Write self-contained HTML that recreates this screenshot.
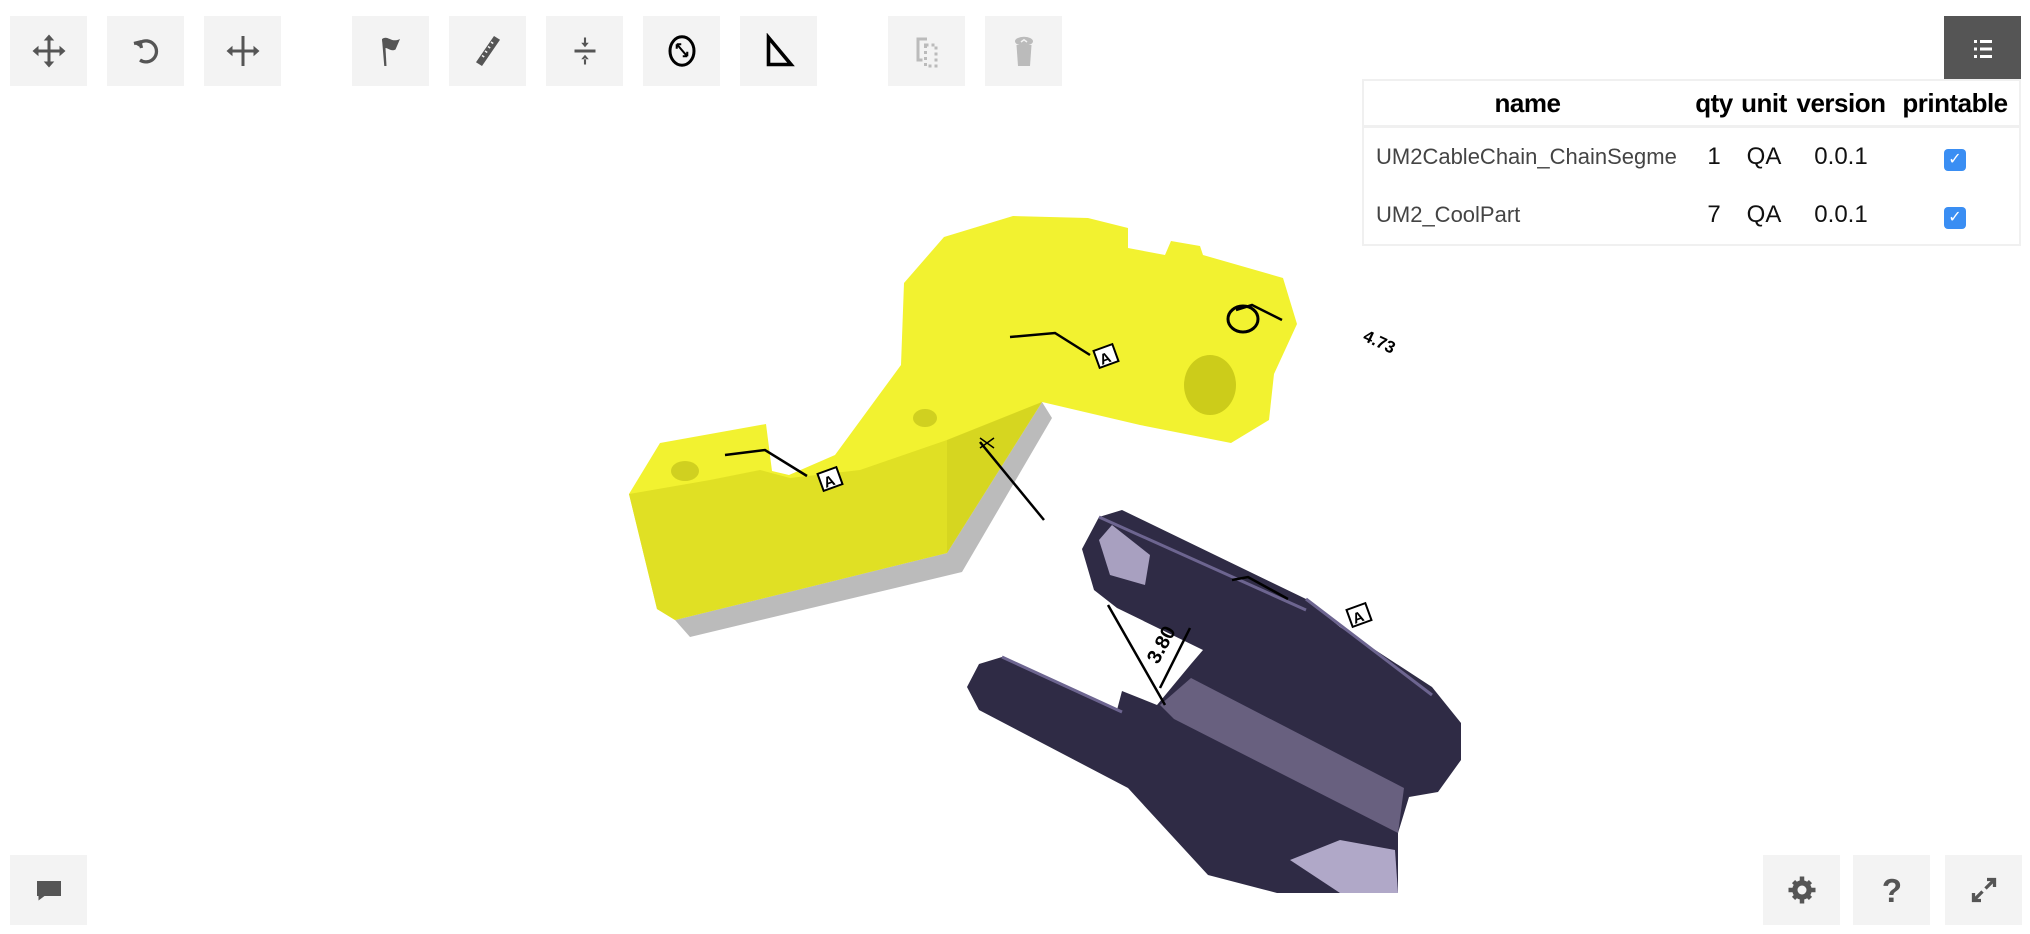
<!DOCTYPE html>
<html><head><meta charset="utf-8"><style>
body{margin:0;width:2030px;height:934px;background:#fff;position:relative;overflow:hidden;font-family:"Liberation Sans",sans-serif}
.b{position:absolute;width:77px;height:70px;background:#f3f3f3;display:flex;align-items:center;justify-content:center}
.b svg{width:36px;height:36px}
table{position:absolute;left:1362px;top:79px;width:659px;border-collapse:collapse;border:2px solid #f0f0f0;table-layout:fixed}
th{font-weight:bold;font-size:26px;height:44px;padding:0;color:#000;border-bottom:3px solid #f0f0f0;letter-spacing:-0.5px}
td{height:58px;padding:0;font-size:24px;color:#111;text-align:center;white-space:nowrap;overflow:hidden}
td.n{text-align:left;padding-left:12px;color:#444;font-size:22px;text-overflow:clip}
.cb{display:inline-block;width:22px;height:22px;background:#3a8ef3;border-radius:4px;color:#fff;font-size:16px;line-height:22px;text-align:center}
</style></head><body>
<div class="b" style="left:10px;top:16px"><svg viewBox="0 0 24 24" fill="#555"><path d="M11 3h2v18h-2zM3 11h18v2H3z"/><path d="M12 1l-3.5 4h7zM12 23l-3.5-4h7zM1 12l4-3.5v7zM23 12l-4-3.5v7z"/></svg></div>
<div class="b" style="left:107px;top:16px"><svg viewBox="0 0 24 24" fill="none" stroke="#555" stroke-width="2.2"><path d="M8 6.5A7 7 0 1 1 8 18"/><path d="M4 7l4-1 1 4" fill="#555"/></svg></div>
<div class="b" style="left:204px;top:16px"><svg viewBox="0 0 24 24" fill="#555"><path d="M11 2h2v20h-2zM3 11h18v2H3z"/><path d="M1 12l4-3.5v7zM23 12l-4-3.5v7z"/></svg></div>
<div class="b" style="left:352px;top:16px"><svg viewBox="0 0 24 24" fill="#555"><path d="M6 4l2 0 1 18h-1.5z"/><path d="M6 4c4-3 6 3 12 0l-3 7c-4 2-6-3-8 0z"/></svg></div>
<div class="b" style="left:449px;top:16px"><svg viewBox="0 0 24 24" fill="#555"><path d="M16 2l4 2.5L8 22l-4-2.5z"/><path d="M8 15l1.5 1M10 12l1.5 1M12 9l1.5 1M14 6l1.5 1" stroke="#f3f3f3" stroke-width="1"/></svg></div>
<div class="b" style="left:546px;top:16px"><svg viewBox="0 0 24 24" fill="#555"><rect x="5" y="11" width="14" height="2"/><path d="M11.3 3h1.4v4h-1.4zM9.5 6.5h5L12 9.5zM11.3 17h1.4v4h-1.4zM9.5 17.5h5L12 14.5z"/></svg></div>
<div class="b" style="left:643px;top:16px"><svg viewBox="0 0 24 24" fill="none" stroke="#000" stroke-width="2"><ellipse cx="12" cy="12" rx="8" ry="9.5"/><path d="M9 8l6 7M8.5 7.5v3M8.5 7.5h3M15.5 15.5v-3M15.5 15.5h-3" stroke-width="1.4"/></svg></div>
<div class="b" style="left:740px;top:16px"><svg viewBox="0 0 24 24" fill="none" stroke="#000" stroke-width="2.4"><path d="M5 3v18h15z"/></svg></div>
<div class="b" style="left:888px;top:16px"><svg viewBox="0 0 24 24" fill="none" stroke="#bbb" stroke-width="2"><path d="M12 4H6v14h3"/><path d="M11 8h7v14h-7z" stroke-dasharray="2 2"/></svg></div>
<div class="b" style="left:985px;top:16px"><svg viewBox="0 0 24 24" fill="#bbb"><ellipse cx="12" cy="5.5" rx="6" ry="3"/><path d="M7 8h10l-1 14H8z"/><path d="M10 6l2-1.5 2 1.5" stroke="#f3f3f3" stroke-width="1" fill="none"/></svg></div>
<div class="b" style="left:1944px;top:16px;height:65px;background:#555"><svg viewBox="0 0 24 24" fill="#fff"><rect x="6" y="6" width="2" height="2"/><rect x="10" y="6" width="8" height="2"/><rect x="6" y="11" width="2" height="2"/><rect x="10" y="11" width="8" height="2"/><rect x="6" y="16" width="2" height="2"/><rect x="10" y="16" width="8" height="2"/></svg></div>
<table>
<colgroup><col style="width:328px"><col style="width:46px"><col style="width:54px"><col style="width:100px"><col></colgroup>
<tr><th>name</th><th>qty</th><th>unit</th><th>version</th><th>printable</th></tr>
<tr><td class="n">UM2CableChain_ChainSegme</td><td>1</td><td>QA</td><td>0.0.1</td><td><span class="cb">✓</span></td></tr>
<tr><td class="n">UM2_CoolPart</td><td>7</td><td>QA</td><td>0.0.1</td><td><span class="cb">✓</span></td></tr>
</table>
<svg style="position:absolute;left:0;top:0" width="2030" height="934">
<polygon points="675,620 947,553 1042,402 1052,418 962,572 690,637" fill="#bbb"/>
<polygon points="629,494 660,443 766,424 772,471 789,475 835,455 901,365 904,283 944,237 1013,216 1088,218 1128,228 1128,248 1165,255 1171,241 1200,246 1203,255 1283,278 1297,324 1274,374 1269,420 1231,443 1140,425 1042,402 947,553 675,620 657,609" fill="#f2f230"/>
<polygon points="629,494 657,609 675,620 947,553 947,440 860,470 790,478 760,470 710,480" fill="#e0e024"/>
<polygon points="947,553 947,440 1042,402" fill="#d6d620"/>
<ellipse cx="685" cy="471" rx="14" ry="10" fill="#d0d020"/>
<ellipse cx="925" cy="418" rx="12" ry="9" fill="#d0d020"/>
<ellipse cx="1210" cy="385" rx="26" ry="30" fill="#cccc1a"/>
<path d="M1236 310 l16 -5 l30 15" stroke="#000" stroke-width="2.5" fill="none"/>
<ellipse cx="1243" cy="319" rx="15" ry="13" stroke="#000" stroke-width="3" fill="none"/>
<text x="1362" y="340" font-size="17" font-weight="bold" transform="rotate(25 1362 340)" font-family="Liberation Sans">4.73</text>
<path d="M725 455 l40 -5 l42 26 M1010 337 l45 -4 l35 22" stroke="#000" stroke-width="2.5" fill="none"/>
<rect x="820" y="470" width="20" height="18" fill="#fff" stroke="#000" stroke-width="2" transform="rotate(-20 830 479)"/><text x="823" y="486" font-size="15" font-weight="bold" transform="rotate(-20 830 479)">A</text>
<rect x="1096" y="347" width="20" height="18" fill="#fff" stroke="#000" stroke-width="2" transform="rotate(-20 1106 356)"/><text x="1099" y="363" font-size="15" font-weight="bold" transform="rotate(-20 1106 356)">A</text>
<path d="M980 438 l14 10 M994 438 l-14 10" stroke="#000" stroke-width="1.5"/>
<path d="M980 442 l64 78" stroke="#000" stroke-width="2.5"/>
<polygon points="1082,549 1099,517 1122,510 1306,599 1340,627 1432,687 1461,723 1461,760 1438,792 1409,797 1398,833 1398,893 1277,893 1208,875 1128,788 979,710 967,687 979,664 1002,657 1117,710 1122,691 1157,705 1191,664 1203,650 1117,608 1094,590" fill="#2f2b45"/>
<polygon points="1191,678 1404,788 1398,833 1174,719 1160,705" fill="#68607f"/>
<polygon points="1099,540 1112,525 1150,555 1145,585 1110,575" fill="#a8a0c0"/>
<polygon points="1290,860 1340,893 1398,893 1395,850 1340,840" fill="#b0a8c8"/>
<path d="M1099,517 L1306,610 M1002,657 L1122,712 M1306,599 L1432,695" stroke="#6d6590" stroke-width="3"/>
<path d="M1232 580 l16 -3 l40 22" stroke="#000" stroke-width="2.5" fill="none"/>
<rect x="1349" y="606" width="20" height="18" fill="#fff" stroke="#000" stroke-width="2" transform="rotate(-20 1359 615)"/><text x="1352" y="622" font-size="15" font-weight="bold" transform="rotate(-20 1359 615)">A</text>
<path d="M1108 605 l57 100 M1190 628 l-30 60" stroke="#000" stroke-width="2.5"/>
<text x="1158" y="665" font-size="20" font-weight="bold" transform="rotate(-62 1158 665)">3.80</text>
</svg>
<div class="b" style="left:10px;top:855px"><svg viewBox="0 0 24 24" fill="#555"><path d="M4 6h16v10H9l-4 3v-3H4z"/></svg></div>
<div class="b" style="left:1763px;top:855px"><svg viewBox="0 0 24 24" fill="#555"><circle cx="12" cy="12" r="6.5"/><path d="M10.5 3h3v18h-3zM3 10.5h18v3H3z" /><path d="M5.3 7.4l2.1-2.1 11.3 11.3-2.1 2.1zM16.6 5.3l2.1 2.1L7.4 18.7l-2.1-2.1z"/><circle cx="12" cy="12" r="3" fill="#f3f3f3"/></svg></div>
<div class="b" style="left:1853px;top:855px"><svg viewBox="0 0 24 24"><text x="12" y="20" font-size="22" font-weight="bold" text-anchor="middle" fill="#555" font-family="Liberation Sans">?</text></svg></div>
<div class="b" style="left:1945px;top:855px"><svg viewBox="0 0 24 24" fill="none" stroke="#555" stroke-width="2.2"><path d="M13 11l6-6M14 5h5v5M11 13l-6 6M5 14v5h5"/></svg></div>
</body></html>
